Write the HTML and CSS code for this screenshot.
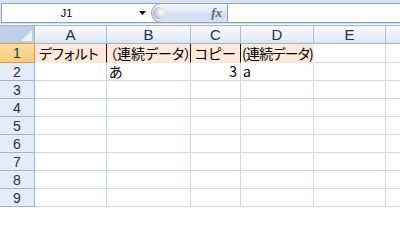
FILE: index.html
```html
<!DOCTYPE html>
<html lang="ja">
<head>
<meta charset="utf-8">
<title>Excel</title>
<link rel="stylesheet" href="styles.css">
</head>
<body>
<div class="app">
  <div class="fbar">
    <div class="namebox">
      <span class="name">J1</span>
      <svg class="dd" width="7" height="4" viewBox="0 0 7 4"><polygon points="0,0 7,0 3.5,4" fill="#000"/></svg>
    </div>
    <div class="pill">
      <span class="knob"></span>
      <span class="fx">fx</span>
    </div>
    <div class="input"></div>
  </div>
  <div class="band"></div>
  <div class="sheet">
    <div class="corner"><svg width="34" height="17" viewBox="0 0 34 17"><polygon points="32,4 32,15 21,15" fill="#eef3fa"/></svg></div>
    <div class="ch">A</div><div class="ch">B</div><div class="ch">C</div><div class="ch">D</div><div class="ch">E</div><div class="ch last"></div>

    <div class="rh sel">1</div>
    <div class="c fill bar wide">デフォルト</div>
    <div class="c fill bar paren">（連続データ）</div>
    <div class="c fill bar plain">コピー</div>
    <div class="c fill end tight">(連続データ)</div>
    <div class="c"></div><div class="c last"></div>

    <div class="rh">2</div>
    <div class="c"></div>
    <div class="c">あ</div>
    <div class="c num">3</div>
    <div class="c">a</div>
    <div class="c"></div><div class="c last"></div>

    <div class="rh">3</div><div class="c"></div><div class="c"></div><div class="c"></div><div class="c"></div><div class="c"></div><div class="c last"></div>
    <div class="rh">4</div><div class="c"></div><div class="c"></div><div class="c"></div><div class="c"></div><div class="c"></div><div class="c last"></div>
    <div class="rh">5</div><div class="c"></div><div class="c"></div><div class="c"></div><div class="c"></div><div class="c"></div><div class="c last"></div>
    <div class="rh">6</div><div class="c"></div><div class="c"></div><div class="c"></div><div class="c"></div><div class="c"></div><div class="c last"></div>
    <div class="rh">7</div><div class="c"></div><div class="c"></div><div class="c"></div><div class="c"></div><div class="c"></div><div class="c last"></div>
    <div class="rh">8</div><div class="c"></div><div class="c"></div><div class="c"></div><div class="c"></div><div class="c"></div><div class="c last"></div>
    <div class="rh">9</div><div class="c"></div><div class="c"></div><div class="c"></div><div class="c"></div><div class="c"></div><div class="c last"></div>
  </div>
</div>
</body>
</html>
```

FILE: styles.css
```css
html, body {
  margin: 0;
  padding: 0;
  overflow: hidden;
}
body {
  background: #fff;
  font-family: "Liberation Sans", "Noto Sans CJK JP", sans-serif;
}
.app {
  width: 400px;
}
.fbar {
  display: flex;
  height: 23px;
  box-sizing: border-box;
  padding: 3px 0 0 1px;
  background: #dae3ee;
}
.namebox {
  display: flex;
  align-items: center;
  width: 160px;
  height: 20px;
  box-sizing: border-box;
  border: 1px solid #8da3bf;
  border-right: none;
  background: #fff;
}
.name {
  width: 129px;
  text-align: center;
  font-size: 11px;
  color: #000;
}
.dd {
  margin-left: 8px;
  display: block;
}
.pill {
  display: flex;
  align-items: center;
  width: 77px;
  height: 20px;
  margin-left: -10px;
  box-sizing: border-box;
  border: 1px solid #8da3bf;
  border-radius: 10px 0 0 10px;
  background: linear-gradient(#f2f6fb 0%, #e1e9f5 45%, #cfdcee 55%, #d8e3f1 100%);
}
.knob {
  width: 12px;
  height: 12px;
  margin-left: 1px;
  border-radius: 50%;
  background: radial-gradient(circle at 70% 45%, #ffffff 0%, #dfe2e7 35%, #9aa1ab 100%);
}
.fx {
  margin-left: auto;
  margin-right: 5px;
  font-family: "Liberation Serif", serif;
  font-style: italic;
  font-weight: bold;
  font-size: 13px;
  color: #5b6775;
}
.input {
  flex: 1;
  height: 20px;
  box-sizing: border-box;
  border-top: 1px solid #8da3bf;
  border-bottom: 1px solid #8da3bf;
  background: #fff;
}
.band {
  height: 2px;
  background: linear-gradient(#d7e0ec 50%, #f5f8fc 50%);
}
.sheet {
  display: grid;
  grid-template-columns: 35px 72px 84px 50px 73px 72px 1fr;
  grid-template-rows: 18px 19px 18px 18px 18px 18px 18px 18px 18px 18px;
  border-top: 1px solid #9eb6ce;
}
.sheet > div {
  box-sizing: border-box;
  min-width: 0;
}
.corner {
  background: #bccfe7;
  border-right: 1px solid #9eb6ce;
  border-bottom: 1px solid #f29536;
}
.corner svg {
  display: block;
}
.ch {
  background: linear-gradient(#f8fafd 0%, #edf2f9 50%, #dbe4f0 100%);
  border-right: 1px solid #a9bfd6;
  border-bottom: 1px solid #9eb6ce;
  text-align: center;
  font-size: 15px;
  line-height: 17px;
  color: #1f3347;
}
.rh {
  background: #e4ecf7;
  border-right: 1px solid #9eb6ce;
  border-bottom: 1px solid #9eb6ce;
  text-align: center;
  font-size: 14px;
  line-height: 19px;
  color: #1f3347;
}
.rh.sel {
  background: linear-gradient(#fbdca4, #f7cb80);
  border-right-color: #f29536;
  border-bottom-color: #f29536;
}
.c {
  display: flex;
  align-items: flex-end;
  padding: 0 2px 1px 2px;
  overflow: hidden;
  white-space: nowrap;
  border-right: 1px solid #d0d7e5;
  border-bottom: 1px solid #d0d7e5;
  font-family: "Noto Sans CJK JP", sans-serif;
  font-size: 14px;
  line-height: 16px;
  font-feature-settings: "palt";
  color: #000;
}
.c.fill {
  background: #fde9d9;
  border-bottom-color: #fde9d9;
}
.c.bar {
  border-right-color: #111;
}
.c.end {
  border-right-color: #fde9d9;
}
.c.wide {
  padding-left: 4px;
}
.c.paren {
  padding-left: 3px;
  padding-right: 0;
}
.c.plain {
  font-feature-settings: normal;
  padding-left: 3px;
}
.c.tight {
  letter-spacing: -0.8px;
  padding-left: 1px;
}
.c.num {
  justify-content: flex-end;
  padding-right: 3px;
}
.sheet > .last {
  border-right: none;
}
```
